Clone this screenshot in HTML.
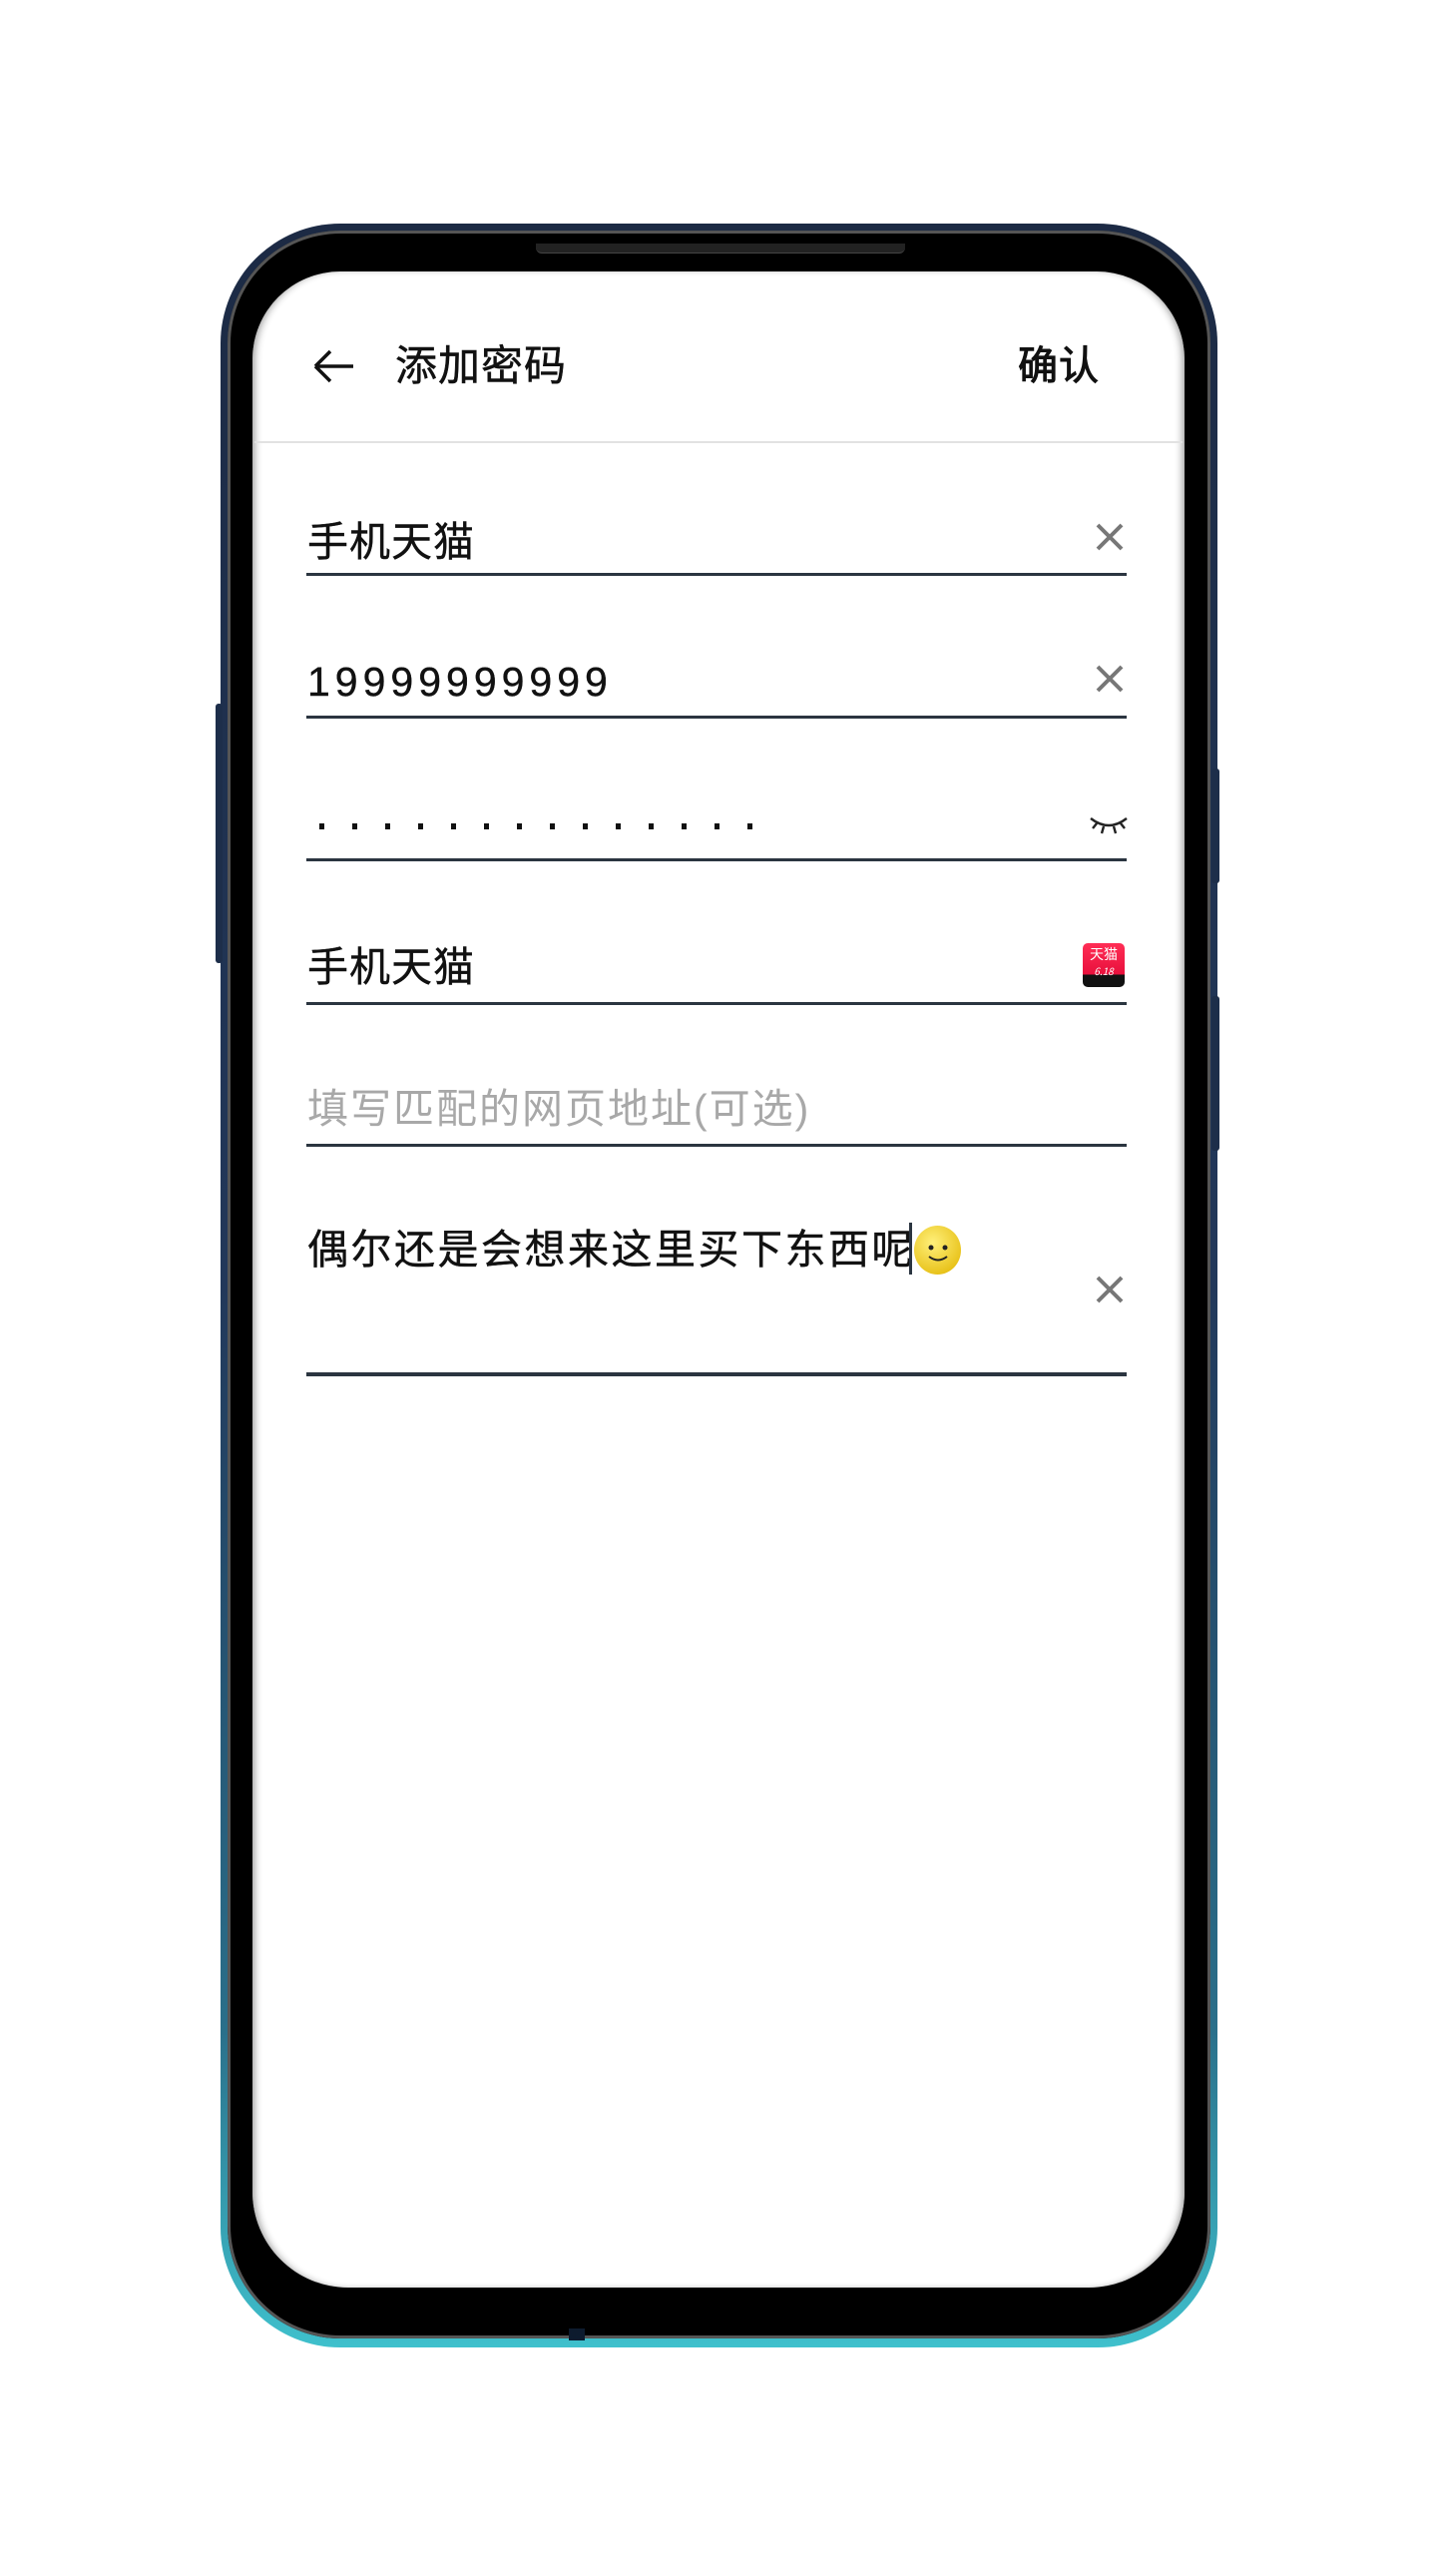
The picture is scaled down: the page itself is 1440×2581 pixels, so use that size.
<!DOCTYPE html>
<html><head><meta charset="utf-8"><style>
*{margin:0;padding:0;box-sizing:border-box}
body{width:1440px;height:2581px;background:#fff;position:relative;overflow:hidden;font-family:"Liberation Sans","Noto Sans CJK SC",sans-serif}
.abs{position:absolute}
.outer{left:221px;top:224px;width:999px;height:2128px;border-radius:120px;background:linear-gradient(#1c2a44 0%,#22385a 50%,#2a6f8a 85%,#3fc0cc 100%)}
.bez{left:228px;top:231px;width:985px;height:2112px;border-radius:113px;background:#000;box-shadow:inset 0 0 0 3px #555}
.screen{left:253px;top:272px;width:934px;height:2020px;border-radius:88px 88px 96px 96px;background:#fff;box-shadow:inset 6px 0 8px -4px #999,inset -6px 0 8px -4px #999}
.t{color:#111;font-size:41px;line-height:48px;white-space:nowrap;letter-spacing:1px}
.line{left:307px;width:822px;height:3px;background:#2b3540}
.x{width:30px;height:30px}
</style></head><body>
<div class="abs outer"></div>
<div class="abs bez"></div>
<div class="abs" style="left:537px;top:244px;width:370px;height:10px;background:#222;border-radius:0 0 6px 6px;border-bottom:1px solid #444"></div>
<div class="abs screen"></div>
<div class="abs" style="left:1214px;top:770px;width:8px;height:115px;background:#1d2e4a;border-radius:3px"></div>
<div class="abs" style="left:1214px;top:998px;width:8px;height:155px;background:#1d2e4a;border-radius:3px"></div>
<div class="abs" style="left:216px;top:705px;width:7px;height:260px;background:#1d2e4a;border-radius:3px"></div>
<div class="abs" style="left:570px;top:2333px;width:16px;height:12px;background:#0d1b2e"></div>

<svg class="abs" style="left:312px;top:348px" width="46" height="38" viewBox="0 0 46 38"><path d="M4 19H42M4 19L19 4M4 19L19 34" stroke="#111" stroke-width="3.5" fill="none"/></svg>
<div class="abs t" style="left:396px;top:343px;font-size:42px;-webkit-text-stroke:0.5px #111">添加密码</div>
<div class="abs t" style="left:1020px;top:343px;font-size:40px;-webkit-text-stroke:1px #111">确认</div>
<div class="abs" style="left:255px;top:442px;width:930px;height:2px;background:#e2e2e2"></div>

<div class="abs t" style="left:308px;top:519px;-webkit-text-stroke:0.4px #111">手机天猫</div>
<svg class="abs x" style="left:1097px;top:523px"><path d="M3 3L27 27M27 3L3 27" stroke="#777" stroke-width="4"/></svg>
<div class="abs line" style="top:574px"></div>

<div class="abs t" style="left:308px;top:659px;letter-spacing:5px;-webkit-text-stroke:0.4px #111">19999999999</div>
<svg class="abs x" style="left:1097px;top:665px"><path d="M3 3L27 27M27 3L3 27" stroke="#777" stroke-width="4"/></svg>
<div class="abs line" style="top:717px"></div>

<svg class="abs" style="left:318px;top:818px" width="450" height="20">
<g fill="#111">
<rect x="2" y="7" width="5" height="6"/><rect x="35" y="7" width="5" height="6"/><rect x="68" y="7" width="5" height="6"/><rect x="101" y="7" width="5" height="6"/><rect x="134" y="7" width="5" height="6"/><rect x="167" y="7" width="5" height="6"/><rect x="200" y="7" width="5" height="6"/><rect x="233" y="7" width="5" height="6"/><rect x="266" y="7" width="5" height="6"/><rect x="299" y="7" width="5" height="6"/><rect x="332" y="7" width="5" height="6"/><rect x="365" y="7" width="5" height="6"/><rect x="398" y="7" width="5" height="6"/><rect x="431" y="7" width="5" height="6"/></g></svg>
<svg class="abs" style="left:1091px;top:814px" width="40" height="26" viewBox="0 0 40 26"><path d="M2 6Q20 20 38 6M8 11L4 16M15 14L13 21M25 14L27 21M32 11L36 16" stroke="#222" stroke-width="2.4" fill="none"/></svg>
<div class="abs line" style="top:860px"></div>

<div class="abs t" style="left:308px;top:945px;-webkit-text-stroke:0.4px #111">手机天猫</div>
<div class="abs" style="left:1085px;top:945px;width:42px;height:44px;border-radius:5px;background:linear-gradient(#ff2d55,#e8103c 72%,#111 72%);color:#fff;font-size:14px;line-height:16px;text-align:center;padding-top:3px;font-family:'Noto Sans CJK SC',sans-serif">天猫<br><span style="font-size:10px;font-style:italic">6.18</span></div>
<div class="abs line" style="top:1004px"></div>

<div class="abs t" style="left:308px;top:1087px;color:#a8a8a8;letter-spacing:2px">填写匹配的网页地址(可选)</div>
<div class="abs line" style="top:1146px"></div>

<div class="abs t" style="left:308px;top:1228px;letter-spacing:2.5px;-webkit-text-stroke:0.4px #111">偶尔还是会想来这里买下东西呢</div>
<div class="abs" style="left:911px;top:1225px;width:3px;height:52px;background:#2b3540"></div>
<div class="abs" style="left:916px;top:1228px;width:47px;height:49px;border-radius:50%;background:radial-gradient(circle at 40% 35%,#fff07a,#e8c21a 75%,#c9a10c)"></div>
<svg class="abs" style="left:916px;top:1228px" width="47" height="49"><circle cx="17" cy="22" r="2.5" fill="#222"/><circle cx="31" cy="22" r="2.5" fill="#222"/><path d="M15 31Q24 38 33 31" stroke="#222" stroke-width="2" fill="none"/></svg>
<svg class="abs x" style="left:1097px;top:1277px"><path d="M3 3L27 27M27 3L3 27" stroke="#777" stroke-width="4"/></svg>
<div class="abs line" style="top:1375px;height:4px"></div>
</body></html>
